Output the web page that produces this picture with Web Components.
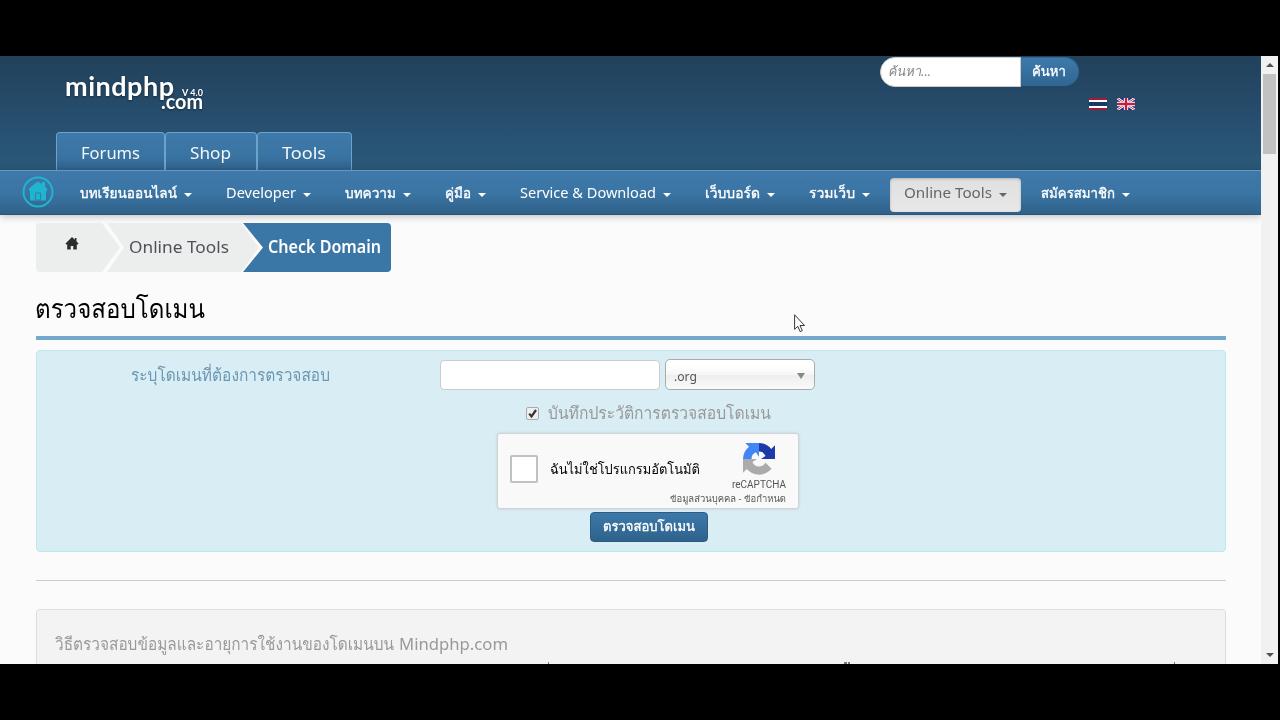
<!DOCTYPE html>
<html lang="th">
<head>
<meta charset="utf-8">
<title>ตรวจสอบโดเมน</title>
<style>
	html, body { margin: 0; background: #000; }
	body {
		width: 1280px; height: 720px; overflow: hidden;
		font-family: "Noto Sans", "Loma", "Noto Sans Thai", "Open Sans", sans-serif;
	}
</style>
</head>
<body>
<mind-page></mind-page>

<script>
"use strict";
/* [ base ]
=================================== */
const define = ( name, template, setup ) => {
	window.customElements.define( name, class extends HTMLElement {
		constructor() {
			super();
			this.attachShadow( { mode: "open" } ).innerHTML = template;
		}
		connectedCallback() {
			if( setup ) setup( this, this.shadowRoot );
		}
	} );
};

/* [ fit-text: one line of text that fills the width w ]
=================================== */
define( "fit-text", `
<style>
	:host { display: block; flex: none; white-space: nowrap; }
	span { display: inline-block; transform-origin: 0 50%; vertical-align: top; }
</style>
<span><slot></slot></span>
`, ( el, root ) => {
	const span = root.querySelector( "span" ),
		w = Number( el.getAttribute( "w" ) );
	el.style.width = w + "px";
	span.style.transform = "none";
	span.style.transform = `scaleX( ${ w / span.getBoundingClientRect().width } )`;
} );

/* [ header ]
=================================== */
define( "site-logo", `
<style>
	:host { display: block; width: 140px; height: 44px; }
	svg { display: block; overflow: visible; filter: drop-shadow( 0 1px 1px #0006 ); }
	text { fill: #fff; font-family: Lato, sans-serif; font-weight: 700; }
</style>
<svg width="140" height="44" viewBox="64 70 140 44">
	<text x="65" y="96" font-size="27" textLength="109">mindphp</text>
	<text x="182" y="96" font-size="9" textLength="21">V 4.0</text>
	<text x="161" y="108.500" font-size="20" textLength="42" lengthAdjust="spacingAndGlyphs">.com</text>
</svg>
` );

define( "search-box", `
<style>
	:host { display: flex; height: 30px; font-size: 13px; line-height: 27px; }
	.field {
		box-sizing: border-box; width: 141px; padding-left: 7px; height: 30px;
		background: #fff; border: 1px solid #ccc; border-radius: 15px 0 0 15px;
		color: #888; font-style: italic;
	}
	.btn {
		box-sizing: border-box; width: 58px; height: 29px; padding-left: 11px;
		border: 1px solid #32688f; border-left: 0; border-radius: 0 15px 15px 0;
		background: linear-gradient( #3d7aab, #2f6693 ); color: #fff; -webkit-text-stroke: .3px;
	}
</style>
<div class="field"><fit-text w="43">ค้นหา...</fit-text></div>
<div class="btn"><fit-text w="34">ค้นหา</fit-text></div>
` );

define( "lang-flags", `
<style>
	:host { display: flex; gap: 10px; }
	svg { display: block; }
</style>
<svg width="18" height="12" viewBox="0 0 18 12">
	<path fill="#a51931" d="M0 0h18v12H0z"/><path fill="#fff" d="M0 2h18v8H0z"/><path fill="#173a63" d="M0 4h18v4H0z"/>
</svg>
<svg width="18" height="12" viewBox="0 0 18 12">
	<path fill="#1b2c78" d="M0 0h18v12H0z"/>
	<path stroke="#fff" stroke-width="2.600" d="M0 0l18 12M18 0L0 12"/>
	<path stroke="#c8334d" stroke-width="1" d="M0 0l18 12M18 0L0 12"/>
	<path stroke="#fff" stroke-width="4.400" d="M9 0v12M0 6h18"/>
	<path stroke="#c22040" stroke-width="2.400" d="M9 0v12M0 6h18"/>
</svg>
` );

define( "top-tab", `
<style>
	:host {
		box-sizing: border-box; display: flex; height: 38px; padding-left: 24px;
		border: 1px solid #6ca2cc; border-bottom: 0; border-radius: 4px 4px 0 0;
		background: linear-gradient( #3d79aa, #3a74a3 60%, #32648d );
		color: #f3f8fb; font-size: 17px; line-height: 40px;
	}
</style>
<slot></slot>
` );

define( "site-header", `
<style>
	:host {
		box-sizing: border-box; display: flex; justify-content: space-between;
		height: 114px; padding-left: 56px;
		background: linear-gradient( #22415b, #274f70 60%, #2b5979 );
	}
	.left { display: flex; flex-direction: column; justify-content: space-between; }
	site-logo { margin: 14px 0 0 8px; }
	.tabs { display: flex; }
	.right { width: 381px; padding-top: 1px; }
	lang-flags { margin: 11px 0 0 209px; }
</style>
<div class="left">
	<site-logo></site-logo>
	<div class="tabs">
		<top-tab style="width:109px"><fit-text w="59">Forums</fit-text></top-tab>
		<top-tab style="width:92px"><fit-text w="41">Shop</fit-text></top-tab>
		<top-tab style="width:95px"><fit-text w="44">Tools</fit-text></top-tab>
	</div>
</div>
<div class="right">
	<search-box></search-box>
	<lang-flags></lang-flags>
</div>
` );

/* [ menu ]
=================================== */
define( "nav-item", `
<style>
	:host {
		display: flex; align-items: center; gap: 7px; height: 34px; padding: 0 14px;
		border-radius: 4px; color: #fff; font-size: 14px; line-height: 30px;
	}
	:host([lang="th"]) { -webkit-text-stroke: .35px; }
	:host([active]) {
		background: linear-gradient( #e0e0e0, #e8e8e8 ); color: #666;
		box-shadow: inset 0 1px 3px #0003;
	}
	::slotted(*) { margin-top: -3px; }
	i { border: 4px solid transparent; border-top-color: currentColor; border-bottom: 0; margin-top: 1px; }
</style>
<slot></slot><i></i>
` );

define( "main-nav", `
<style>
	:host {
		box-sizing: border-box; display: flex; align-items: center; height: 45px; padding-left: 22px;
		border-top: 1px solid #6799bf; border-bottom: 1px solid #2c5577;
		background: linear-gradient( #3e79ab, #3b75a4 50%, #2f6189 );
		box-shadow: 0 1px 8px #0004; position: relative;
	}
	svg { margin: -2px 12px 0 0; flex: none; }
	nav { display: flex; gap: 6px; padding-top: 4px; }
</style>
<svg width="32" height="32" viewBox="0 0 32 32">
	<circle cx="16" cy="16" r="14.500" fill="none" stroke="#1fb4cf" stroke-width="2"/>
	<path fill="#1fb4cf" d="M15.500 5.500L7 12.500V15h1v9.500h16V15h1v-2.500l-2-1.700V6h-3v2.300l-1.500-1.300z"/>
	<path d="M13.500 24v-7h5v7z" fill="none" stroke="#2f7fa8" stroke-width="1"/>
</svg>
<nav>
	<nav-item lang="th"><fit-text w="97">บทเรียนออนไลน์</fit-text></nav-item>
	<nav-item><fit-text w="70">Developer</fit-text></nav-item>
	<nav-item lang="th"><fit-text w="51">บทความ</fit-text></nav-item>
	<nav-item lang="th"><fit-text w="26">คู่มือ</fit-text></nav-item>
	<nav-item><fit-text w="136">Service &amp; Download</fit-text></nav-item>
	<nav-item lang="th"><fit-text w="55">เว็บบอร์ด</fit-text></nav-item>
	<nav-item lang="th"><fit-text w="46">รวมเว็บ</fit-text></nav-item>
	<nav-item active><fit-text w="88">Online Tools</fit-text></nav-item>
	<nav-item lang="th"><fit-text w="74">สมัครสมาชิก</fit-text></nav-item>
</nav>
` );

/* [ breadcrumb ]
=================================== */
define( "bread-crumb", `
<style>
	:host { display: flex; height: 49px; line-height: 47px; font-size: 17px; color: #4c5257; }
	div { box-sizing: border-box; background: #eceeed; flex: none; }
	.home {
		width: 84px; padding: 14px 0 0 29px; border-radius: 4px 0 0 4px;
		clip-path: polygon( 0 0, 66px 0, 84px 50%, 66px 100%, 0 100% );
	}
	.mid {
		width: 152px; margin-left: -13px; padding-left: 22px;
		clip-path: polygon( 0 0, 134px 0, 152px 50%, 134px 100%, 0 100%, 17px 50% );
	}
	.here {
		width: 148px; margin-left: -16px; padding-left: 25px; border-radius: 0 4px 4px 0;
		background: #3a77a7; color: #fff; font-weight: 600;
		clip-path: polygon( 0 0, 100% 0, 100% 100%, 0 100%, 20px 50% );
	}
	svg { display: block; }
</style>
<div class="home"><svg width="14" height="13" viewBox="0 0 14 13"><path fill="#2c2c2c" d="M7 0L.5 6.500 1.200 7.500H2.200V12.500H5.700V9H8.300V12.500H11.800V7.500H12.800L13.500 6.500 11.500 4.500V1H9.800V2.800z"/></svg></div>
<div class="mid"><fit-text w="100">Online Tools</fit-text></div>
<div class="here"><fit-text w="113">Check Domain</fit-text></div>
` );

/* [ recaptcha ]
=================================== */
define( "re-captcha", `
<style>
	:host {
		box-sizing: border-box; display: flex; align-items: center; width: 302px; height: 76px;
		padding-left: 12px; background: #f9f9f9; border: 1px solid #d3d3d3; border-radius: 3px;
		box-shadow: 0 0 3px #0002; color: #000; font-size: 14px;
	}
	.box {
		box-sizing: border-box; width: 28px; height: 28px; margin: 0 12px 5px 0;
		background: #fff; border: 2px solid #c1c1c1; border-radius: 2px;
	}
	.msg { line-height: 20px; margin-bottom: 5px; }
	.brand {
		display: flex; flex-direction: column; align-items: flex-end; flex: 1; margin-left: -40px;
		padding: 4px 12px 0 0; color: #555; font-size: 9px; line-height: 14px;
	}
	svg { margin: 2px 11px 3px 0; }
	.name { font-family: Roboto, "Liberation Sans", sans-serif; font-size: 10px; }
</style>
<div class="box"></div>
<fit-text class="msg" w="150">ฉันไม่ใช่โปรแกรมอัตโนมัติ</fit-text>
<div class="brand">
	<svg width="32" height="32" viewBox="0 0 64 64">
		<path fill="#1c3aa9" d="M64 32V4.500l-7.600 7.600A32 32 0 0 0 31.600 0v17l1 .2c7 0 10.400 4.300 12.400 8.800L36 32z"/>
		<path fill="#4285f4" d="M31.900 0H4.500l7.600 7.600A32 32 0 0 0 0 32h17c0-7 4-12 9-13.500l6 9.500z"/>
		<path fill="#ababab" d="M0 32v27.500l7.600-7.600A32 32 0 0 0 57 51.500L44.600 39c-2 5-6 8-12.600 8s-11-4-13-9l9-6z"/>
	</svg>
	<fit-text class="name" w="54">reCAPTCHA</fit-text>
	<fit-text w="116">ข้อมูลส่วนบุคคล - ข้อกำหนด</fit-text>
</div>
` );

/* [ form ]
=================================== */
define( "domain-form", `
<style>
	:host {
		box-sizing: border-box; display: flex; flex-direction: column; height: 202px;
		padding: 8px 0 0 94px; background: #d9edf5; border: 1px solid #bce8ec; border-radius: 4px;
	}
	.row { display: flex; align-items: center; height: 31px; }
	.row > fit-text { color: #6a97b3; font-size: 17px; line-height: 30px; margin-right: 110px; }
	.input {
		box-sizing: border-box; width: 220px; height: 30px; margin-right: 5px;
		background: #fff; border: 1px solid #ccc; border-radius: 4px;
	}
	.select {
		box-sizing: border-box; display: flex; align-items: center; justify-content: space-between;
		width: 150px; height: 31px; padding: 3px 9px 0 8px;
		border: 1px solid #aaa; border-radius: 5px; color: #555; font-size: 13px;
		background: linear-gradient( #fff 20%, #f6f6f6 50%, #eee 52%, #fafafa );
	}
	.select i { border: 4px solid transparent; border-top: 6px solid #888; border-bottom: 0; }
	.centre { display: flex; flex-direction: column; align-items: center; margin-left: -60px; }
	.save {
		display: flex; align-items: center; gap: 9px; height: 43px;
		padding-top: 3px; box-sizing: border-box;
		color: #999; font-size: 17px; line-height: 36px;
	}
	.btn {
		box-sizing: border-box; width: 118px; height: 30px; margin: 3px 0 0 2px; padding-left: 12px;
		border: 1px solid #2b5c84; border-radius: 4px; color: #fff; font-size: 13px; line-height: 26px; -webkit-text-stroke: .35px;
		background: linear-gradient( #3c79aa, #2e628b );
	}
</style>
<div class="row">
	<fit-text w="199">ระบุโดเมนที่ต้องการตรวจสอบ</fit-text>
	<div class="input"></div>
	<div class="select"><fit-text w="23">.org</fit-text><i></i></div>
</div>
<div class="centre">
	<div class="save">
		<svg width="13" height="13" viewBox="0 0 13 13">
			<rect x=".5" y=".5" width="12" height="12" rx="1.500" fill="#eee" stroke="#aaa"/>
			<path d="M3.200 6.600l2.300 2.800L10 3" fill="none" stroke="#333" stroke-width="2.200"/>
		</svg>
		<fit-text w="223">บันทึกประวัติการตรวจสอบโดเมน</fit-text>
	</div>
	<re-captcha></re-captcha>
	<div class="btn"><fit-text w="92">ตรวจสอบโดเมน</fit-text></div>
</div>
` );

/* [ scroll bar ]
=================================== */
define( "scroll-bar", `
<style>
	:host { display: flex; flex-direction: column; align-items: center; width: 17px; background: #f1f1f1; }
	i { border: 4px solid transparent; }
	.up { border-bottom-color: #505050; border-top: 0; margin: 7px 0; }
	.thumb { width: 13px; height: 80px; background: #c1c1c1; }
	.down { border-top-color: #505050; border-bottom: 0; margin: auto 0 7px; }
</style>
<i class="up"></i><div class="thumb"></div><i class="down"></i>
` );

/* [ page ]
=================================== */
define( "mind-page", `
<style>
	:host { display: flex; width: 1278px; height: 608px; padding-top: 56px; }
	.page { width: 1261px; height: 608px; overflow: hidden; background: #fbfbfb; }
	main { padding: 8px 35px 0 36px; }
	h1 {
		box-sizing: border-box; height: 68px; margin: 0 0 10px; padding-top: 14px;
		border-bottom: 4px solid #75a8cd; color: #000; font-size: 27px; font-weight: 400; line-height: 44px;
	}
	h1 fit-text { margin-left: -1px; }
	hr { margin: 28px 0; border: 0; border-top: 1px solid #ccc; }
	.well {
		box-sizing: border-box; height: 90px; padding: 17px 18px 0;
		background: #f3f3f3; border: 1px solid #ddd; border-radius: 4px;
		color: #999; font-size: 17px; line-height: 34px;
	}
	.title { display: flex; gap: 5px; }
	/* tops of the next line's vowel marks, above the fold */
	.marks { display: flex; padding: 1px 0 0 493px; }
	.marks i { height: 4px; background: #777; }
	.cursor { position: absolute; left: 794px; top: 314px; }
</style>
<div class="page">
	<site-header></site-header>
	<main-nav></main-nav>
	<main>
		<bread-crumb></bread-crumb>
		<h1><fit-text w="170">ตรวจสอบโดเมน</fit-text></h1>
		<domain-form></domain-form>
		<hr>
		<div class="well">
			<div class="title">
				<fit-text w="339">วิธีตรวจสอบข้อมูลและอายุการใช้งานของโดเมนบน</fit-text>
				<fit-text w="109">Mindphp.com</fit-text>
			</div>
			<div class="marks"><i style="width:1px"></i><i style="width:3px;margin-left:295px"></i><i style="width:2px;margin-left:1px"></i><i style="width:1px;margin-left:324px"></i></div>
		</div>
	</main>
</div>
<scroll-bar></scroll-bar>
<svg class="cursor" width="12" height="19" viewBox="0 0 12 19">
	<path fill="#fff" stroke="#222" stroke-width=".9" d="M.6.8v14.500l3.200-3 2.300 5.300 2.200-1-2.300-5.100h4.500z"/>
</svg>
` );
</script>
</body>
</html>
